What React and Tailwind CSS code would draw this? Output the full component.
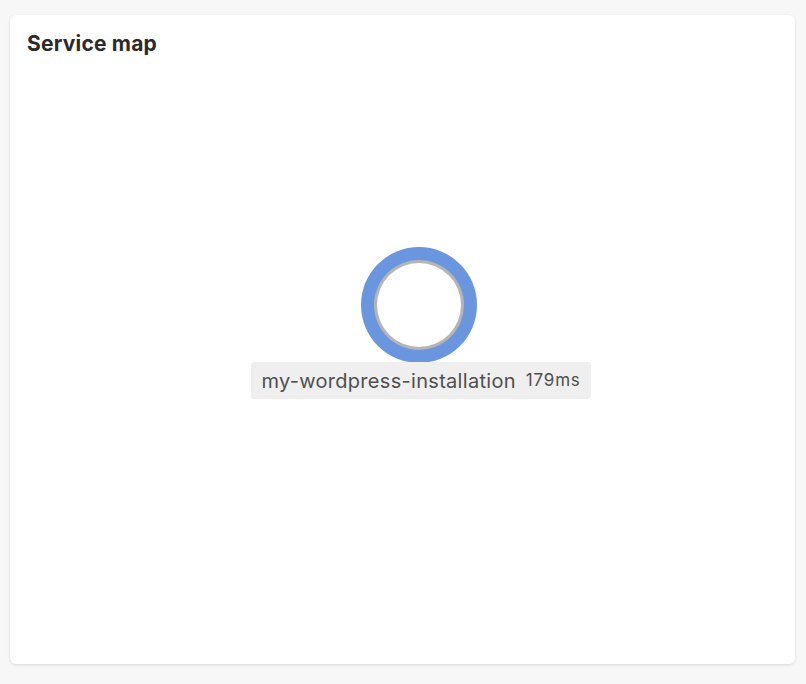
export default function App() {
  return (
    <div className="w-[806px] h-[684px] bg-[#f7f7f7] pt-[15px] pl-[10px] pr-[11px] pb-[20px] font-['Inter',sans-serif]">
      <div className="h-full bg-white rounded-[6px] shadow-[0_1px_3px_rgba(0,0,0,0.12)] flex flex-col">
        <h2 className="px-[17px] pt-[16px] text-[21px] leading-[25px] font-bold text-[#2b2b2b] tracking-[0.2px]">Service map</h2>
        <div className="relative flex-1">
          <div className="absolute left-[351px] top-[191px] w-[116px] h-[116px] rounded-full bg-[#6a96e0] p-[13px]">
            <div className="w-full h-full rounded-full bg-[#b5b5b5] p-[3px]">
              <div className="w-full h-full rounded-full bg-white" />
            </div>
          </div>
          <div className="absolute left-[241px] top-[306px] h-[37px] w-[340px] rounded-[3px] bg-[#efefef] flex items-center justify-center gap-[10px] text-[#4f4f4f]">
            <span className="text-[20px] tracking-[0.3px]">my-wordpress-installation</span>
            <span className="text-[17px] tracking-[0.8px]">179ms</span>
          </div>
        </div>
      </div>
    </div>
  );
}
